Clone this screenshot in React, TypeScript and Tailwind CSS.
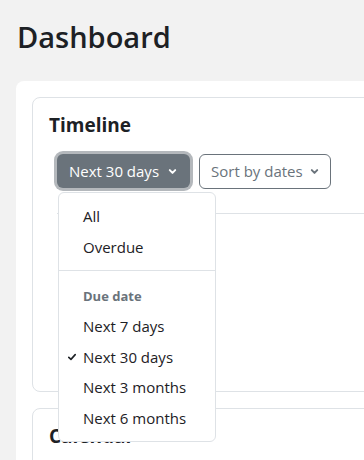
const font = { fontFamily: '"Open Sans", "Noto Sans", sans-serif' }

function Chevron({ className }: { className?: string }) {
  return (
    <svg viewBox="0 0 10 10" className={className} fill="none" stroke="currentColor" strokeWidth={2.2} strokeLinecap="round" strokeLinejoin="round">
      <path d="M2 3.5 L5 6.5 L8 3.5" />
    </svg>
  )
}

function Check() {
  return (
    <svg viewBox="0 0 10 10" className="absolute left-[9px] top-1/2 -translate-y-1/2 w-[8px] h-[8px]" fill="none" stroke="#1d2125" strokeWidth={2} strokeLinecap="round" strokeLinejoin="round">
      <path d="M1 5.5 L3.7 8 L9 2" />
    </svg>
  )
}

function Item({ label, checked }: { label: string; checked?: boolean }) {
  return (
    <div className="relative px-6 py-1 text-[15px] leading-[22.5px] text-[#1d2125]">
      {checked && <Check />}
      {label}
    </div>
  )
}

export default function App() {
  return (
    <div className="relative w-[364px] h-[460px] overflow-hidden bg-[#f2f2f2]" style={font}>
      <h1 className="pl-[17px] pt-[16px] text-[29px] leading-[42px] font-semibold text-[#1d2125]">Dashboard</h1>

      <div className="mt-[23px] ml-4 w-[400px] bg-white rounded-tl-lg pt-4 pl-4">
        <div className="w-[380px] h-[295px] border border-[#dee2e6] rounded-lg px-4 pt-[13px]">
          <h5 className="text-[19px] leading-[28px] font-bold text-[#1d2125]">Timeline</h5>
          <div className="flex items-center mt-[12px] ml-[5px]">
            <div className="rounded-[9px] p-[3px] bg-[#b4b8bc]">
              <button className="flex items-center gap-[9px] h-[34px] pl-[12px] pr-[13px] rounded-[6px] bg-[#6a737b] text-white text-[15px]">
                Next 30 days
                <Chevron className="w-[9px] h-[9px]" />
              </button>
            </div>
            <button className="ml-[6px] flex items-center gap-[7px] h-[35px] pl-[11px] pr-[11px] rounded-[6px] border border-[#6a737b] bg-white text-[#6a737b] text-[15px]">
              Sort by dates
              <Chevron className="w-[9px] h-[9px]" />
            </button>
          </div>
          <div className="mt-[22px] ml-[8px] border-t border-[#dee2e6]" />
        </div>

        <div className="mt-4 w-[380px] h-[120px] border border-[#dee2e6] rounded-lg px-4 pt-[13px]">
          <h5 className="text-[19px] leading-[28px] font-bold text-[#1d2125]">Calendar</h5>
        </div>
      </div>

      <div className="absolute left-[58px] top-[192px] w-[158px] py-2 bg-white border border-[#dee2e6] rounded-[6px]">
        <Item label="All" />
        <Item label="Overdue" />
        <div className="my-2 border-t border-[#dee2e6]" />
        <div className="px-6 pt-2 pb-[6px] text-[13px] leading-[18px] font-bold text-[#6a737b]">Due date</div>
        <Item label="Next 7 days" />
        <Item label="Next 30 days" checked />
        <Item label="Next 3 months" />
        <Item label="Next 6 months" />
      </div>
    </div>
  )
}
